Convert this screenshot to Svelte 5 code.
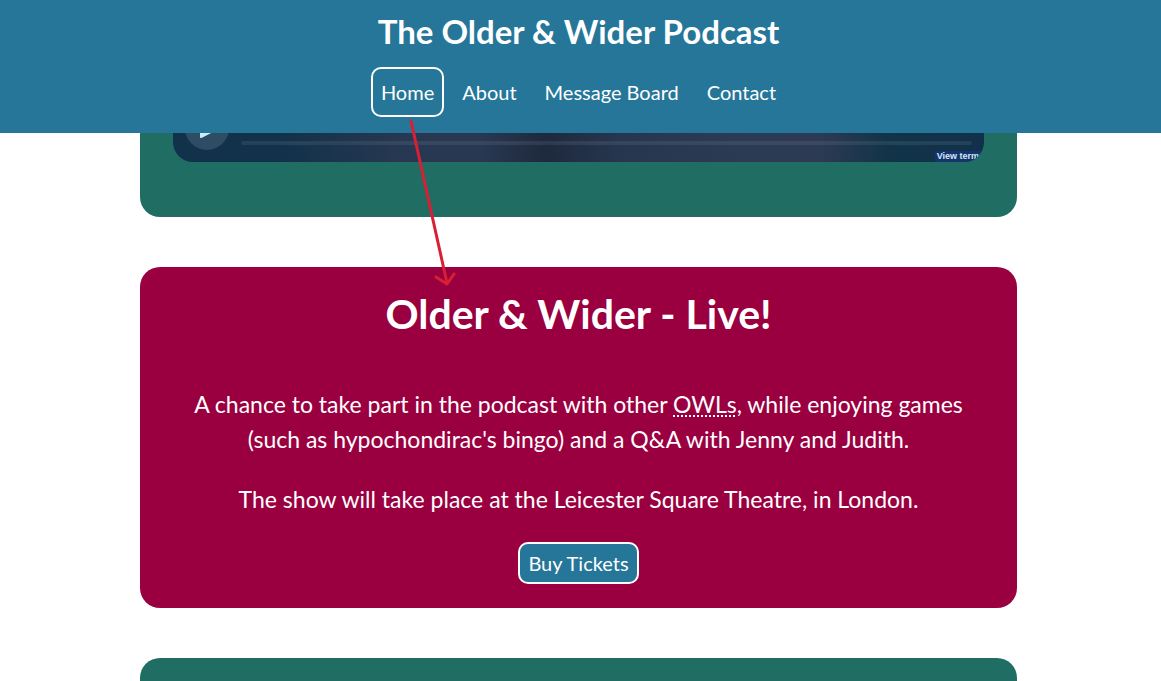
<script>
  const links = ['Home', 'About', 'Message Board', 'Contact'];
  let current = $state('Home');
</script>

<div class="page">
  <header>
    <h1>The Older &amp; Wider Podcast</h1>
    <nav aria-label="Main">
      {#each links as link}
        <a
          href={'#' + link.toLowerCase().replace(' ', '-')}
          class:current={link === current}
          onclick={() => (current = link)}>{link}</a>
      {/each}
    </nav>
    <svg class="arrow" width="60" height="180" viewBox="0 0 60 180" aria-hidden="true">
      <path d="M13 13 L49 175" />
      <path d="M38 169 L49 176 L56 166" />
    </svg>
  </header>

  <main>
    <section class="card episodes">
      <div class="player">
        <button class="play" aria-label="Play">
          <svg width="26" height="22" viewBox="0 0 26 22" aria-hidden="true">
            <path d="M7 2 L25 11 L7 20 Z" fill="#cdeaf8" stroke="#cdeaf8" stroke-width="2" stroke-linejoin="round" />
          </svg>
        </button>
        <div class="track"></div>
        <a class="terms" href="#terms">View terms</a>
      </div>
    </section>

    <section class="card live">
      <h2>Older &amp; Wider - Live!</h2>
      <p>
        A chance to take part in the podcast with other <abbr title="Older Wider Listeners">OWLs</abbr>, while enjoying games (such as hypochondirac's bingo) and a Q&amp;A with Jenny and Judith.
      </p>
      <p>The show will take place at the Leicester Square Theatre, in London.</p>
      <a class="tickets" href="#tickets">Buy Tickets</a>
    </section>

    <section class="card next"></section>
  </main>
</div>

<style>
  :global(body) {
    margin: 0;
    background: #fff;
  }

  .page {
    display: flex;
    flex-direction: column;
    height: 100vh;
    overflow: hidden;
    font-family: Lato, "Liberation Sans", sans-serif;
    color: #fff;
  }

  header {
    position: relative;
    z-index: 1;
    display: flex;
    flex-direction: column;
    align-items: center;
    gap: 12px;
    padding: 7px 4px 16px 0;
    background: #257699;
  }

  h1,
  h2 {
    margin: 0;
    font-weight: 700;
  }

  h1 {
    font-size: 33px;
    line-height: 48px;
  }

  nav {
    display: flex;
    gap: 8px;
  }

  nav a,
  .tickets {
    box-sizing: border-box;
    padding: 0 8px;
    border: 2px solid transparent;
    border-radius: 10px;
    color: inherit;
    font-size: 20px;
    text-decoration: none;
  }

  nav a {
    line-height: 46px;
  }

  nav a.current {
    border-color: #fff;
  }

  .arrow {
    position: absolute;
    top: 108px;
    left: calc(50% - 183px);
    fill: none;
    stroke: #d71f35;
    stroke-width: 3;
    stroke-linecap: round;
    stroke-linejoin: round;
    pointer-events: none;
  }

  main {
    flex: 1;
    display: flex;
    flex-direction: column;
    gap: 50px;
    padding: 0 144px 0 140px;
  }

  .card {
    border-radius: 20px;
    background: #206e63;
  }

  .episodes {
    padding: 0 33px 55px;
    border-radius: 0 0 20px 20px;
  }

  .player {
    position: relative;
    display: flex;
    align-items: flex-end;
    gap: 12px;
    height: 17px;
    padding: 0 12px 12px;
    overflow: hidden;
    border-radius: 0 0 20px 20px;
    background: linear-gradient(90deg, #12314a 0%, #12314a 13%, #283852 29%, #283852 38%, #1e293d 46%, #26364f 55%, #2c3b54 70%, #2c3a53 80%, #113449 88%, #12304b 100%);
  }

  .play {
    display: grid;
    place-items: center;
    flex: none;
    width: 44px;
    height: 44px;
    padding: 0;
    border: 0;
    border-radius: 50%;
    background: #2e4c64;
  }

  .track {
    flex: 1;
    height: 4px;
    margin-bottom: 5px;
    border-radius: 2px;
    background: rgb(255 255 255 / 8%);
  }

  .terms {
    position: absolute;
    right: -2px;
    bottom: 0;
    padding: 0 2px;
    background: #15356a;
    color: #d5e6fa;
    font: 700 9px/11px "Liberation Sans", sans-serif;
    text-decoration: none;
  }

  .live {
    display: flex;
    flex-direction: column;
    align-items: center;
    padding: 19px 50px 24px;
    background: #9a003f;
    text-align: center;
  }

  h2 {
    margin-bottom: 45px;
    font-size: 41px;
    line-height: 56px;
  }

  p {
    margin: 0 0 25px;
    font-size: 23px;
    line-height: 35px;
  }

  abbr {
    text-decoration: underline dotted 2px;
    text-underline-offset: 2px;
  }

  .tickets {
    border-color: #fff;
    background: #257699;
    line-height: 38px;
  }

  .next {
    flex: 1;
    border-radius: 20px 20px 0 0;
  }
</style>
